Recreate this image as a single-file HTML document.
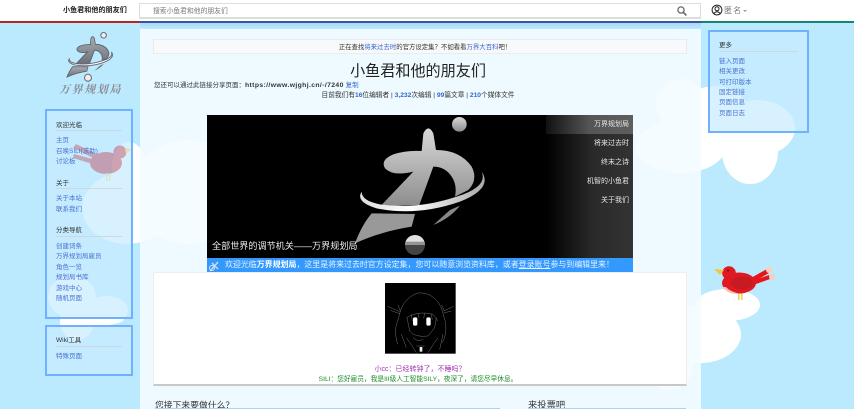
<!DOCTYPE html>
<html lang="zh">
<head>
<meta charset="utf-8">
<title>小鱼君和他的朋友们</title>
<style>
*{box-sizing:border-box}
html,body{margin:0;padding:0;width:854px;height:409px;overflow:hidden}
#page{position:relative;width:854px;height:409px;overflow:hidden;background:#bbe9fe;font-family:"Liberation Sans","Noto Sans CJK SC",sans-serif;color:#333;filter:blur(.25px)}
.a{position:absolute;white-space:nowrap}
.cloud{position:absolute;background:#fff;border-radius:50%}
a,.l{color:#3366cc;text-decoration:none}
#main{position:absolute;left:140px;top:29px;width:561px;height:380px;background:rgba(244,252,255,.9)}
.box{position:absolute;border:2px solid #6fb0ff;background:rgba(200,235,255,.72)}
.t{position:absolute;font-size:6.5px;line-height:8px;color:#333;white-space:nowrap}
.n{position:absolute;font-size:6.5px;line-height:8px;color:#4b74cf;white-space:nowrap}
.r{position:absolute;height:1px;background:#cfd6dc}
.m{position:absolute;right:4px;font-size:7px;line-height:9px;color:#e8e8e8;white-space:nowrap}
</style>
</head>
<body>
<div id="page">
<!-- clouds -->
<div class="cloud" style="left:82px;top:172px;width:90px;height:72px"></div>
<div class="cloud" style="left:112px;top:142px;width:34px;height:50px"></div>
<div class="cloud" style="left:130px;top:140px;width:120px;height:104px"></div>
<div class="cloud" style="left:48px;top:276px;width:48px;height:42px"></div>
<div class="cloud" style="left:60px;top:304px;width:34px;height:36px"></div>
<div class="cloud" style="left:86px;top:296px;width:42px;height:28px"></div>
<div class="cloud" style="left:60px;top:312px;width:64px;height:14px"></div>
<div class="cloud" style="left:656px;top:79px;width:50px;height:50px"></div>
<div class="cloud" style="left:636px;top:120px;width:90px;height:53px"></div>
<div class="cloud" style="left:680px;top:86px;width:70px;height:60px"></div>
<div class="cloud" style="left:720px;top:100px;width:75px;height:56px"></div>
<div class="cloud" style="left:722px;top:120px;width:56px;height:64px"></div>
<div class="cloud" style="left:695px;top:289px;width:65px;height:32px"></div>
<div class="cloud" style="left:659px;top:306px;width:82px;height:57px"></div>
<div class="cloud" style="left:647px;top:340px;width:46px;height:50px"></div>

<div id="main"></div>

<!-- right bird -->
<svg class="a" style="left:712px;top:262px" width="66" height="42" viewBox="0 0 66 42">
<rect x="26" y="30" width="1.6" height="8" fill="#f5d34f"/><rect x="29" y="30" width="1.6" height="8" fill="#f5d34f"/>
<path d="M30 21 L55 7 L57 11 L33 25 Z" fill="#e8141c"/>
<path d="M32 22 L57 13 L58 17 L33 26 Z" fill="#e8141c"/>
<circle cx="57" cy="8" r="3" fill="#fbcdbb"/><circle cx="60" cy="15" r="3" fill="#fbcdbb"/>
<ellipse cx="27" cy="21" rx="17" ry="10.5" fill="#e01822"/>
<path d="M14 25 Q18 30 30 32 Q15 33 11 25 Z" fill="#f8c4b4"/>
<ellipse cx="30" cy="21" rx="11" ry="6.5" fill="#c81a22"/>
<circle cx="17" cy="11" r="6.8" fill="#e01822"/>
<path d="M12 8 L2 7 L8 13 Z" fill="#f5c542"/>
<circle cx="16" cy="8.5" r="1" fill="#402020"/>
</svg>

<!-- header -->
<div class="a" style="left:0;top:0;width:854px;height:21px;background:#fff"></div>
<div class="a" style="left:0;top:21px;width:140px;height:2px;background:#b32424"></div>
<div class="a" style="left:140px;top:21px;width:561px;height:2px;background:#3a55a0"></div>
<div class="a" style="left:701px;top:21px;width:153px;height:2px;background:#14866d"></div>
<div class="a" style="left:140px;top:23px;width:561px;height:6px;background:linear-gradient(#a9d8f5,#bbe9fe)"></div>
<div class="a" style="left:63px;top:6px;font-size:7.1px;line-height:9px;font-weight:bold;color:#222">小鱼君和他的朋友们</div>
<div class="a" style="left:139px;top:3px;width:562px;height:16px;background:#fff;border:1px solid #ddd;border-bottom-width:2px"></div>
<div class="a" style="left:153px;top:7px;font-size:6.8px;line-height:9px;color:#777">搜索小鱼君和他的朋友们</div>
<svg class="a" style="left:676px;top:5px" width="12" height="12" viewBox="0 0 12 12"><circle cx="5" cy="5" r="3.1" fill="none" stroke="#666" stroke-width="1.3"/><path d="M7.3 7.3 L10.4 10.4" stroke="#666" stroke-width="1.6"/></svg>
<svg class="a" style="left:711px;top:4px" width="12" height="12" viewBox="0 0 12 12"><circle cx="6" cy="6" r="4.9" fill="none" stroke="#222" stroke-width="1"/><circle cx="6" cy="4.8" r="2" fill="none" stroke="#222" stroke-width="1"/><path d="M2.8 9.5 Q6 6 9.2 9.5" fill="none" stroke="#222" stroke-width="1"/></svg>
<div class="a" style="left:724px;top:5px;font-size:8px;line-height:11px;letter-spacing:1.2px;color:#777">匿名</div>
<div class="a" style="left:743px;top:10px;width:0;height:0;border:2px solid transparent;border-top:2px solid #999"></div>

<!-- logo defs -->
<svg width="0" height="0" style="position:absolute">
<defs>
<linearGradient id="g" x1="0" y1="0" x2="0" y2="1"><stop offset="0" stop-color="#d8d8d8"/><stop offset="1" stop-color="#8c8c8c"/></linearGradient>
<linearGradient id="g2" x1="0" y1="0" x2="0" y2="1"><stop offset="0" stop-color="#a8adb2"/><stop offset="1" stop-color="#6a7076"/></linearGradient>
<linearGradient id="w" x1="0" y1="0" x2="1" y2="0"><stop offset="0" stop-color="#ddd"/><stop offset=".4" stop-color="#fff"/><stop offset="1" stop-color="#aaa"/></linearGradient>
</defs>
</svg>

<!-- left logo -->
<svg class="a" style="left:65px;top:32px" width="53" height="51" viewBox="0 0 450 435">
<path d="M220 55 Q235 25 250 55 L258 105 Q330 105 365 155 Q385 195 355 225 L315 245 Q322 210 305 185 Q285 155 250 155 L208 270 L90 275 L190 170 Q130 185 105 160 Q90 135 130 118 Q170 105 215 108 Z" fill="url(#g2)" stroke="#5a6066" stroke-width="7"/>
<path d="M65 295 L195 297 L185 335 Q90 350 15 385 Q35 330 65 295 Z" fill="url(#g2)" stroke="#5a6066" stroke-width="6"/>
<path d="M250 330 L300 285 L330 272 Q300 310 250 330 Z" fill="#777"/>
<path d="M35 230 Q15 260 80 280 Q200 305 330 260 Q430 220 395 170 Q415 215 320 245 Q200 285 90 268 Q35 258 35 230 Z" fill="#fff" stroke="#667" stroke-width="8"/>
<circle cx="328" cy="28" r="24" fill="#eee" stroke="#778" stroke-width="10"/>
<circle cx="195" cy="390" r="30" fill="#eee" stroke="#778" stroke-width="10"/>
</svg>
<div class="a" style="left:59px;top:83px;font-family:'Liberation Serif','Noto Serif CJK SC',serif;font-size:11px;line-height:14px;letter-spacing:1.6px;color:#8a8f94;font-style:italic;font-weight:bold">万界规划局</div>

<!-- left nav -->
<div class="box" style="left:45px;top:109px;width:88px;height:210px"></div>
<div class="box" style="left:45px;top:325px;width:88px;height:51px"></div>
<!-- left faded bird -->
<svg class="a" style="left:70px;top:140px;opacity:.36" width="66" height="44" viewBox="0 0 66 44">
<path d="M45 23 L6 4 L3 8 L43 28 Z" fill="#c03040"/>
<path d="M44 25 L4 14 L3 18 L42 30 Z" fill="#c03040"/>
<ellipse cx="36" cy="23" rx="16" ry="11" fill="#c01830"/>
<circle cx="50" cy="12" r="6.5" fill="#c01830"/>
<path d="M55 8 L62 9 L56 14 Z" fill="#e8c840"/>
<rect x="36" y="33" width="1.5" height="8" fill="#e0d060"/><rect x="39" y="33" width="1.5" height="8" fill="#e0d060"/>
</svg>
<div class="t" style="left:56px;top:122px">欢迎光临</div><div class="r" style="left:56px;top:130px;width:66px"></div>
<div class="n" style="left:56px;top:137px">主页</div>
<div class="n" style="left:56px;top:148px">召唤SILI(求助)</div>
<div class="n" style="left:56px;top:158px">讨论板</div>
<div class="t" style="left:56px;top:180px">关于</div><div class="r" style="left:56px;top:188px;width:66px"></div>
<div class="n" style="left:56px;top:195px">关于本站</div>
<div class="n" style="left:56px;top:206px">联系我们</div>
<div class="t" style="left:56px;top:227px">分类导航</div><div class="r" style="left:56px;top:236px;width:66px"></div>
<div class="n" style="left:56px;top:243px">创建词条</div>
<div class="n" style="left:56px;top:253px">万界规划局雇员</div>
<div class="n" style="left:56px;top:264px">角色一览</div>
<div class="n" style="left:56px;top:274px">规划局书库</div>
<div class="n" style="left:56px;top:285px">游戏中心</div>
<div class="n" style="left:56px;top:295px">随机页面</div>
<div class="t" style="left:56px;top:337px">Wiki工具</div><div class="r" style="left:56px;top:346px;width:66px"></div>
<div class="n" style="left:56px;top:353px">特殊页面</div>

<!-- right nav -->
<div class="box" style="left:708px;top:30px;width:101px;height:103px"></div>
<div class="t" style="left:719px;top:42px">更多</div><div class="r" style="left:719px;top:51px;width:79px"></div>
<div class="n" style="left:719px;top:58px">链入页面</div>
<div class="n" style="left:719px;top:68px">相关更改</div>
<div class="n" style="left:719px;top:79px">可打印版本</div>
<div class="n" style="left:719px;top:89px">固定链接</div>
<div class="n" style="left:719px;top:99px">页面信息</div>
<div class="n" style="left:719px;top:110px">页面日志</div>

<!-- notice -->
<div class="a" style="left:153px;top:39px;width:534px;height:15px;background:#f8f9fa;border:1px solid #eaecf0"></div>
<div class="a" style="left:158px;width:534px;top:44px;text-align:center;font-size:6.4px;line-height:8px;color:#333">正在查找<span class="l">将来过去时</span>的官方设定集？不如看看<span class="l">万界大百科</span>吧！</div>
<div class="a" style="left:153px;width:530px;top:62px;text-align:center;font-size:15.1px;line-height:20px;color:#222">小鱼君和他的朋友们</div>
<div class="a" style="left:154px;top:81px;font-size:6.5px;line-height:9px;color:#333">您还可以通过此链接分享页面：<b style="font-size:6.8px;letter-spacing:.38px">https://www.wjghj.cn/-/7240</b> <span class="l">复制</span></div>
<div class="a" style="left:153px;width:530px;top:91px;text-align:center;font-size:6.7px;line-height:9px;color:#333">目前我们有<b class="l">16</b>位编辑者 | <b class="l">3,232</b>次编辑 | <b class="l">99</b>篇文章 | <b class="l">210</b>个媒体文件</div>

<!-- banner -->
<div class="a" style="left:207px;top:115px;width:426px;height:143px;background:#000;overflow:hidden">
<svg class="a" style="left:143px;top:0" width="150" height="145" viewBox="0 0 450 435">
<path d="M220 55 Q235 25 250 55 L258 105 Q330 105 365 155 Q385 195 355 225 L315 245 Q322 210 305 185 Q285 155 250 155 L208 270 L90 275 L190 170 Q130 185 105 160 Q90 135 130 118 Q170 105 215 108 Z" fill="url(#g)"/>
<path d="M65 295 L195 297 L185 335 Q90 350 15 385 Q35 330 65 295 Z" fill="#999"/>
<path d="M250 330 L300 285 L330 272 Q300 310 250 330 Z" fill="#888"/>
<path d="M35 230 Q15 260 80 280 Q200 305 330 260 Q430 220 395 170 Q415 215 320 245 Q200 285 90 268 Q35 258 35 230 Z" fill="url(#w)"/>
<circle cx="328" cy="28" r="22" fill="url(#g)"/>
<circle cx="195" cy="390" r="30" fill="#444"/>
<path d="M165 390 A30 30 0 0 1 225 390 Z" fill="#e0e0e0"/>
<rect x="165" y="380" width="60" height="10" fill="#555" opacity=".55"/>
</svg>
<div class="a" style="left:339px;top:0;width:87px;height:143px;background:linear-gradient(90deg,#000 0,#2a2a2a 55%,#333 100%)"></div>
<div class="a" style="left:339px;top:0;width:87px;height:19px;background:linear-gradient(90deg,#111 0,#555 50%,#5e5e5e 100%)"></div>
<div class="m" style="top:5px">万界规划局</div>
<div class="m" style="top:24px">将来过去时</div>
<div class="m" style="top:43px">终末之诗</div>
<div class="m" style="top:62px">机智的小鱼君</div>
<div class="m" style="top:81px">关于我们</div>
<div class="a" style="left:5px;top:125px;font-size:9.1px;line-height:13px;color:#eee">全部世界的调节机关——万界规划局</div>
</div>
<div class="a" style="left:207px;top:258px;width:426px;height:15px;background:#3399ff"></div>
<svg class="a" style="left:208px;top:260px" width="12" height="12" viewBox="0 0 12 12"><path d="M2 11 L10 2 M4 3 L10 9" stroke="#cde" stroke-width="1.4"/><circle cx="4" cy="8" r="2.5" fill="none" stroke="#dde" stroke-width="1"/></svg>
<div class="a" style="left:225px;top:259px;font-size:7.95px;line-height:12px;color:#e8f4ff">欢迎光临<b style="color:#fff">万界规划局</b>，这里是将来过去时官方设定集，您可以随意浏览资料库，或者<u>登录账号</u>参与到编辑里来！</div>

<!-- card -->
<div class="a" style="left:153px;top:272px;width:534px;height:114px;background:#fff;border:1px solid #eee;border-bottom:2px solid #c8c8c8"></div>
<svg class="a" style="left:383px;top:281px" width="75" height="75" viewBox="0 0 225 225">
<rect x="6" y="6" width="212" height="212" fill="#000"/>
<g fill="none" stroke="#bbb" stroke-width="1.3" opacity=".7">
<path d="M50 98 Q62 50 105 36 Q150 32 175 80 L188 125 Q192 160 178 185"/>
<path d="M50 98 L38 140 Q36 165 44 190"/>
<path d="M70 110 Q105 88 150 100 L165 120"/>
<path d="M72 110 L80 150 Q95 170 135 165 L155 140 L160 110"/>
<path d="M14 76 L50 92 M22 88 L50 98 M45 72 L52 90"/>
<path d="M212 76 L182 90 M205 90 L182 96 M176 72 L184 90"/>
<path d="M70 170 Q85 190 100 215 M165 170 Q150 190 135 215 M90 170 Q105 185 120 175 M100 195 L125 195 M55 160 L70 200 M180 160 L170 205"/>
<path d="M85 100 L88 120 M105 96 L108 112 M125 96 L122 112 M145 100 L148 116"/>
</g>
<rect x="90" y="109" width="13" height="25" rx="5" fill="#fff"/>
<rect x="130" y="109" width="13" height="25" rx="5" fill="#fff"/>
<rect x="110" y="198" width="8" height="14" fill="#eee"/>
</svg>
<div class="a" style="left:155px;width:530px;top:365px;text-align:center;font-size:7px;line-height:9px;color:#a030b0">小cc：已经转钟了，不睡吗？</div>
<div class="a" style="left:153px;width:530px;top:375px;text-align:center;font-size:6.7px;line-height:9px;color:#1a8f2a">SILI：您好雇员，我是III级人工智能SILY，夜深了，请您尽早休息。</div>

<!-- bottom headings -->
<div class="a" style="left:155px;top:399px;font-size:8.8px;line-height:12px;color:#333">您接下来要做什么？</div>
<div class="a" style="left:528px;top:399px;font-size:9.3px;line-height:12px;color:#333">来投票吧</div>
<div class="a" style="left:155px;top:408px;width:345px;height:1px;background:#a9d3f7"></div>
<div class="a" style="left:528px;top:408px;width:158px;height:1px;background:#a9d3f7"></div>
</div>
</body>
</html>
